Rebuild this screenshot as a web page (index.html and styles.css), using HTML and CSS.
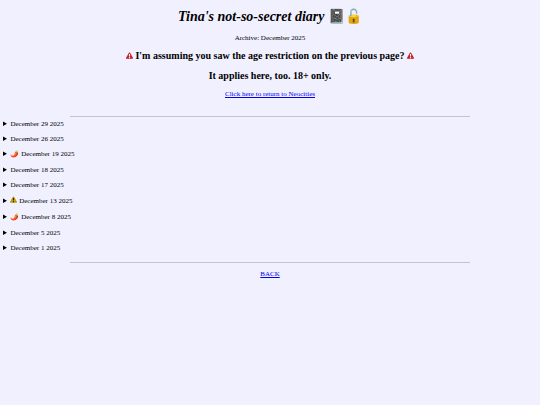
FILE: index.html
```html
<!DOCTYPE html>
<html lang="en">
	<head>
		<title>Tina's not-so-secret diary</title>
		<meta charset="UTF-8" />
		<link rel="stylesheet" href="styles.css">
	</head>
	<body>
		<svg width="0" height="0" class="symbols">
			<symbol id="warning" viewBox="0 0 16 16">
				<path d="M8 2.5 L14.5 14 H1.5 Z" stroke-width="3" stroke-linejoin="round" />
				<path class="mark" d="M8 4.5 V10 M8 11.5 V14" stroke-width="2.5" />
			</symbol>
		</svg>
		<div class="header">
			<h1>Tina's not-so-secret diary <span class="emoji">📓🔓</span></h1>
			<p>Archive: December 2025</p>
			<h2><svg class="warning red"><use href="#warning" /></svg> I'm assuming you saw the age restriction on the previous page? <svg class="warning red"><use href="#warning" /></svg></h2>
			<h2>It applies here, too. 18+ only.</h2>
			<p><a href="#">Click here to return to Neocities</a></p>
		</div>
		<hr />
		<div class="entries">
			<details><summary>December 29 2025</summary></details>
			<details><summary>December 26 2025</summary></details>
			<details class="marked"><summary>🌶️ December 19 2025</summary></details>
			<details><summary>December 18 2025</summary></details>
			<details><summary>December 17 2025</summary></details>
			<details class="marked"><summary><svg class="warning yellow"><use href="#warning" /></svg> December 13 2025</summary></details>
			<details class="marked"><summary>🌶️ December 8 2025</summary></details>
			<details><summary>December 5 2025</summary></details>
			<details><summary>December 1 2025</summary></details>
		</div>
		<hr class="end" />
		<p class="back"><a href="#">BACK</a></p>
	</body>
</html>
```

FILE: styles.css
```css
body {
	margin: 8px 3px;
	background: #f0f0ff;
	color: #000;
	font: 7px/8px "Liberation Serif", "Times New Roman", serif;
}

.symbols {
	position: absolute;
}

.header,
.back {
	text-align: center;
}

h1 {
	margin: 0 0 8px;
	font-size: 14px;
	line-height: 18px;
	font-style: italic;
}

.emoji {
	font-style: normal;
}

h2 {
	margin: 8px 0;
	font-size: 10px;
	line-height: 12px;
}

p {
	margin: 8px 0;
}

a {
	color: #0000ee;
}

hr {
	width: 75%;
	margin: 18px auto 3px;
	border: 0;
	border-top: 1px solid #c4c4d0;
}

hr.end {
	margin-top: 10px;
}

.entries {
	display: flex;
	flex-direction: column;
	gap: 7px;
}

.marked {
	line-height: 9px;
}

.warning {
	width: 7px;
	height: 7px;
}

.red {
	--mark: #fff;
	fill: #c8202c;
	stroke: #c8202c;
}

.yellow {
	--mark: #222;
	fill: #e0b000;
	stroke: #c09a10;
}

.mark {
	stroke: var(--mark);
}

.back {
	margin: 7px 0;
}
```
